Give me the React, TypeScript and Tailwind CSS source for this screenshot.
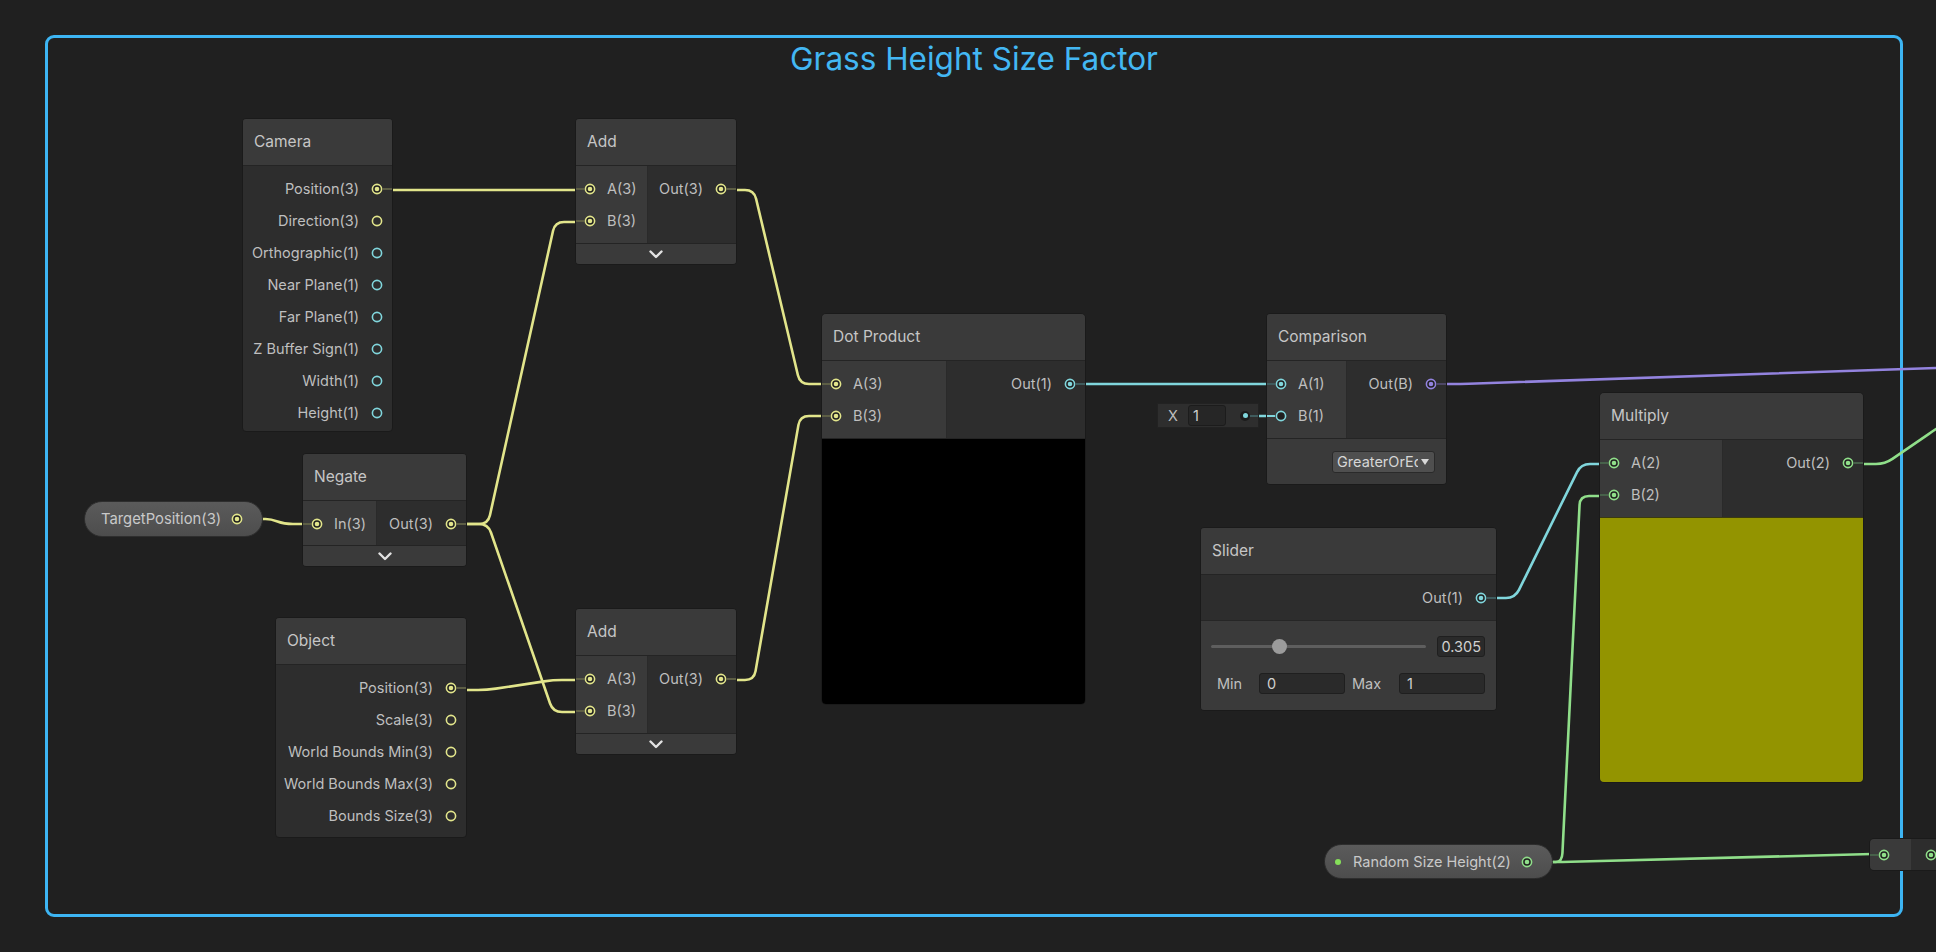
import React from "react";

type T = "v3" | "v1" | "v2" | "b";
const COL: Record<T, string> = { v3: "#e2e58b", v1: "#80d6dc", v2: "#90df8a", b: "#9383df" };
const STUB: Record<T, string> = {
  v3: "bg-[#5d5e45]",
  v1: "bg-[#3f5b5d]",
  v2: "bg-[#47614a]",
  b: "bg-[#4d4766]",
};

function Port({ t, on, dark }: { t: T; on?: boolean; dark?: boolean }) {
  const c = COL[t];
  return (
    <svg width="12" height="12" viewBox="0 0 12 12" className="block shrink-0">
      <circle cx="6" cy="6" r="4.6" fill={on || dark ? "#202020" : "none"} stroke={c} strokeWidth="1.6" />
      {on && <circle cx="6" cy="6" r="2.3" fill={c} />}
    </svg>
  );
}

function OutRow({ label, t, on }: { label: string; t: T; on?: boolean }) {
  return (
    <div className="flex h-[32px] items-center justify-end">
      <span className="mr-[12px] whitespace-nowrap text-[14.5px] text-[#bfbfbf]">{label}</span>
      <Port t={t} on={on} />
      <div className={on ? `h-[2px] w-[9px] ${STUB[t]}` : "h-[2px] w-[9px]"} />
    </div>
  );
}

function InRow({ label, t, on, bright, dark }: { label: string; t: T; on?: boolean; bright?: boolean; dark?: boolean }) {
  return (
    <div className="flex h-[32px] items-center">
      <div className={bright ? "h-[2px] w-[8px] bg-[#80d6dc]" : on ? `h-[2px] w-[8px] ${STUB[t]}` : "h-[2px] w-[8px]"} />
      <Port t={t} on={on} dark={dark} />
      <span className="ml-[11px] whitespace-nowrap text-[14.5px] text-[#bfbfbf]">{label}</span>
    </div>
  );
}

function Header({ title }: { title: string }) {
  return (
    <div className="flex h-[47px] items-center border-b border-[#242424] bg-[#3a3a3a] pl-[11px] text-[15.5px] text-[#c6c6c6]">
      {title}
    </div>
  );
}

function Collapse() {
  return (
    <div className="flex h-[21px] items-center justify-center border-t border-[#242424] bg-[#3a3a3a]">
      <svg width="14" height="9" viewBox="0 0 14 9">
        <polyline points="1.5,1.5 7,7 12.5,1.5" fill="none" stroke="#e2e2e2" strokeWidth="2.4" strokeLinecap="round" strokeLinejoin="round" />
      </svg>
    </div>
  );
}

function rp(pts: number[][], r = 9) {
  let d = `M${pts[0][0]},${pts[0][1]}`;
  for (let i = 1; i < pts.length - 1; i++) {
    const [x0, y0] = pts[i - 1];
    const [x1, y1] = pts[i];
    const [x2, y2] = pts[i + 1];
    const l1 = Math.hypot(x1 - x0, y1 - y0);
    const l2 = Math.hypot(x2 - x1, y2 - y1);
    const a = Math.min(r, l1 / 2);
    const b = Math.min(r, l2 / 2);
    const p1 = [x1 - ((x1 - x0) / l1) * a, y1 - ((y1 - y0) / l1) * a];
    const p2 = [x1 + ((x2 - x1) / l2) * b, y1 + ((y2 - y1) / l2) * b];
    d += ` L${p1[0]},${p1[1]} Q${x1},${y1} ${p2[0]},${p2[1]}`;
  }
  const last = pts[pts.length - 1];
  d += ` L${last[0]},${last[1]}`;
  return d;
}

const WIRES: { c: string; p: number[][] }[] = [
  { c: COL.v3, p: [[390, 190], [579, 190]] },
  { c: COL.v3, p: [[464, 524], [488, 524], [555, 222], [579, 222]] },
  { c: COL.v3, p: [[464, 524], [488, 524], [553, 712], [579, 712]] },
  { c: COL.v3, p: [[260, 519], [271, 519], [284, 524], [306, 524]] },
  { c: COL.v3, p: [[464, 690], [487, 690], [553, 680], [579, 680]] },
  { c: COL.v3, p: [[734, 190], [754, 190], [800, 384], [825, 384]] },
  { c: COL.v3, p: [[734, 680], [754, 680], [800, 416], [825, 416]] },
  { c: COL.v1, p: [[1083, 384], [1270, 384]] },
  { c: COL.v1, p: [[1258, 416], [1270, 416]] },
  { c: COL.v1, p: [[1494, 598], [1515, 598], [1581, 464], [1603, 464]] },
  { c: COL.v2, p: [[1550, 862], [1562, 862], [1580, 496], [1603, 496]] },
  { c: COL.v2, p: [[1550, 862], [1562, 862], [1872, 854]] },
  { c: COL.v2, p: [[1861, 464], [1885, 464], [1936, 429], [1966, 409]] },
  { c: COL.b, p: [[1444, 384], [1460, 384], [1966, 367]] },
];

function Wires() {
  return (
    <svg className="pointer-events-none absolute left-0 top-0" width="1936" height="952">
      {WIRES.map((w, i) => (
        <path key={i} d={rp(w.p)} fill="none" stroke={w.c} strokeWidth="2.6" strokeLinecap="round" strokeLinejoin="round" />
      ))}
    </svg>
  );
}

export default function App() {
  return (
    <div className="relative h-[952px] w-[1936px] overflow-hidden bg-[#202020] font-[Inter,sans-serif]">
      {/* Group */}
      <div className="absolute left-[45px] top-[35px] h-[882px] w-[1858px] rounded-[9px] border-[3px] border-[#3db5f3]">
        <div className="flex justify-center pt-[2px] text-[31.5px] leading-[38px] text-[#43b7f3]">Grass Height Size Factor</div>
      </div>

      <Wires />

      {/* Camera */}
      <div className="absolute left-[242px] top-[118px] w-[151px] overflow-hidden rounded-[4px] border border-[#1a1a1a] bg-[#2d2d2d]">
        <Header title="Camera" />
        <div className="pb-[2px] pt-[7px]">
          <OutRow label="Position(3)" t="v3" on />
          <OutRow label="Direction(3)" t="v3" />
          <OutRow label="Orthographic(1)" t="v1" />
          <OutRow label="Near Plane(1)" t="v1" />
          <OutRow label="Far Plane(1)" t="v1" />
          <OutRow label="Z Buffer Sign(1)" t="v1" />
          <OutRow label="Width(1)" t="v1" />
          <OutRow label="Height(1)" t="v1" />
        </div>
      </div>

      {/* Add 1 */}
      <div className="absolute left-[575px] top-[118px] w-[162px] overflow-hidden rounded-[4px] border border-[#1a1a1a] bg-[#2d2d2d]">
        <Header title="Add" />
        <div className="flex">
          <div className="w-[72px] border-r border-[#2a2a2a] bg-[#3a3a3a] pb-[6px] pt-[7px]">
            <InRow label="A(3)" t="v3" on />
            <InRow label="B(3)" t="v3" on />
          </div>
          <div className="flex-1 pb-[6px] pt-[7px]">
            <OutRow label="Out(3)" t="v3" on />
          </div>
        </div>
        <Collapse />
      </div>

      {/* Target Position pill */}
      <div className="absolute left-[84px] top-[501px] flex h-[36px] w-[179px] items-center rounded-full border border-[#2e2e2e] bg-gradient-to-b from-[#5b5b5b] to-[#4d4d4d] pl-[16px] pr-[19px]">
        <span className="flex-1 whitespace-nowrap text-[14.8px] text-[#c9c9c9]">TargetPosition(3)</span>
        <Port t="v3" on />
      </div>

      {/* Negate */}
      <div className="absolute left-[302px] top-[453px] w-[165px] overflow-hidden rounded-[4px] border border-[#1a1a1a] bg-[#2d2d2d]">
        <Header title="Negate" />
        <div className="flex">
          <div className="w-[74px] border-r border-[#2a2a2a] bg-[#3a3a3a] pb-[5px] pt-[7px]">
            <InRow label="In(3)" t="v3" on />
          </div>
          <div className="flex-1 pb-[5px] pt-[7px]">
            <OutRow label="Out(3)" t="v3" on />
          </div>
        </div>
        <Collapse />
      </div>

      {/* Object */}
      <div className="absolute left-[275px] top-[617px] w-[192px] overflow-hidden rounded-[4px] border border-[#1a1a1a] bg-[#2d2d2d]">
        <Header title="Object" />
        <div className="pb-[5px] pt-[7px]">
          <OutRow label="Position(3)" t="v3" on />
          <OutRow label="Scale(3)" t="v3" />
          <OutRow label="World Bounds Min(3)" t="v3" />
          <OutRow label="World Bounds Max(3)" t="v3" />
          <OutRow label="Bounds Size(3)" t="v3" />
        </div>
      </div>

      {/* Add 2 */}
      <div className="absolute left-[575px] top-[608px] w-[162px] overflow-hidden rounded-[4px] border border-[#1a1a1a] bg-[#2d2d2d]">
        <Header title="Add" />
        <div className="flex">
          <div className="w-[72px] border-r border-[#2a2a2a] bg-[#3a3a3a] pb-[6px] pt-[7px]">
            <InRow label="A(3)" t="v3" on />
            <InRow label="B(3)" t="v3" on />
          </div>
          <div className="flex-1 pb-[6px] pt-[7px]">
            <OutRow label="Out(3)" t="v3" on />
          </div>
        </div>
        <Collapse />
      </div>

      {/* Dot Product */}
      <div className="absolute left-[821px] top-[313px] w-[265px] overflow-hidden rounded-[5px] border border-[#1a1a1a] bg-[#2d2d2d]">
        <Header title="Dot Product" />
        <div className="flex">
          <div className="w-[125px] border-r border-[#2a2a2a] bg-[#3a3a3a] pb-[6px] pt-[7px]">
            <InRow label="A(3)" t="v3" on />
            <InRow label="B(3)" t="v3" on />
          </div>
          <div className="flex-1 pb-[6px] pt-[7px]">
            <OutRow label="Out(1)" t="v1" on />
          </div>
        </div>
        <div className="h-[266px] border-t border-[#242424] bg-black" />
      </div>

      {/* X inline field */}
      <div className="absolute left-[1157px] top-[403px] flex h-[25px] w-[102px] items-center border border-[#222222] bg-[#2e2e2e] pl-[10px]">
        <span className="w-[20px] text-[14.5px] text-[#bdbdbd]">X</span>
        <div className="flex h-[21px] w-[38px] items-center rounded-[3px] border border-[#1c1c1c] bg-[#262626] pl-[4px] text-[14.5px] text-[#cfcfcf]">
          1
        </div>
        <div className="ml-[14px] flex h-[10px] w-[10px] shrink-0 items-center justify-center rounded-full bg-[#1c1c1c]">
          <div className="h-[5px] w-[5px] rounded-full bg-[#80d6dc]" />
        </div>
        <div className="h-[2px] flex-1 bg-[#3f5b5d]" />
      </div>

      {/* Comparison */}
      <div className="absolute left-[1266px] top-[313px] w-[181px] overflow-hidden rounded-[4px] border border-[#1a1a1a] bg-[#2d2d2d]">
        <Header title="Comparison" />
        <div className="flex">
          <div className="w-[80px] border-r border-[#2a2a2a] bg-[#3a3a3a] pb-[6px] pt-[7px]">
            <InRow label="A(1)" t="v1" on />
            <InRow label="B(1)" t="v1" bright dark />
          </div>
          <div className="flex-1 pb-[6px] pt-[7px]">
            <OutRow label="Out(B)" t="b" on />
          </div>
        </div>
        <div className="flex h-[46px] items-center justify-end border-t border-[#242424] bg-[#3a3a3a] pr-[11px]">
          <div className="flex h-[22px] w-[103px] items-center rounded-[3px] border border-[#2a2a2a] bg-[#4f4f4f] pl-[4px]">
            <span className="w-[81px] overflow-hidden whitespace-nowrap text-[14.5px] leading-[20px] text-[#d6d6d6]">GreaterOrEqual</span>
            <svg width="8" height="6" viewBox="0 0 8 6" className="ml-[3px]">
              <polygon points="0,0 8,0 4,6" fill="#d8d8d8" />
            </svg>
          </div>
        </div>
      </div>

      {/* Slider */}
      <div className="absolute left-[1200px] top-[527px] w-[297px] overflow-hidden rounded-[4px] border border-[#1a1a1a] bg-[#2d2d2d]">
        <Header title="Slider" />
        <div className="flex h-[45px] items-center justify-end">
          <OutRow label="Out(1)" t="v1" on />
        </div>
        <div className="border-t border-[#262626] bg-[#3a3a3a] pb-[16px] pl-[10px] pr-[11px] pt-[15px]">
          <div className="flex h-[21px] items-center">
            <div className="relative h-[3px] flex-1 rounded-full bg-[#5e5e5e]">
              <div className="absolute left-[61px] top-[-6px] h-[15px] w-[15px] rounded-full bg-[#9b9b9b]" />
            </div>
            <div className="ml-[11px] flex h-[21px] w-[48px] items-center justify-end rounded-[3px] border border-[#1f1f1f] bg-[#2a2a2a] pr-[3px] text-[14.5px] text-[#d0d0d0]">
              0.305
            </div>
          </div>
          <div className="mt-[16px] flex h-[21px] items-center pl-[6px] text-[14.5px] text-[#bfbfbf]">
            <span className="w-[42px]">Min</span>
            <div className="flex h-[21px] w-[86px] items-center rounded-[3px] border border-[#1f1f1f] bg-[#2a2a2a] pl-[7px] text-[#d0d0d0]">0</div>
            <span className="ml-[7px] w-[47px]">Max</span>
            <div className="flex h-[21px] w-[86px] items-center rounded-[3px] border border-[#1f1f1f] bg-[#2a2a2a] pl-[7px] text-[#d0d0d0]">1</div>
          </div>
        </div>
      </div>

      {/* Multiply */}
      <div className="absolute left-[1599px] top-[392px] w-[265px] overflow-hidden rounded-[5px] border border-[#1a1a1a] bg-[#2d2d2d]">
        <Header title="Multiply" />
        <div className="flex">
          <div className="w-[123px] border-r border-[#2a2a2a] bg-[#3a3a3a] pb-[6px] pt-[7px]">
            <InRow label="A(2)" t="v2" on />
            <InRow label="B(2)" t="v2" on />
          </div>
          <div className="flex-1 pb-[6px] pt-[7px]">
            <OutRow label="Out(2)" t="v2" on />
          </div>
        </div>
        <div className="h-[265px] border-t border-[#3a3a10] bg-[#939400]" />
      </div>

      {/* Random Size Height pill */}
      <div className="absolute left-[1324px] top-[844px] flex h-[35px] w-[229px] items-center rounded-full border border-[#2e2e2e] bg-gradient-to-b from-[#5b5b5b] to-[#4d4d4d] pl-[10px] pr-[19px]">
        <div className="h-[6px] w-[6px] rounded-full bg-[#86e05a]" />
        <span className="ml-[12px] flex-1 whitespace-nowrap text-[14.5px] text-[#c9c9c9]">Random Size Height(2)</span>
        <Port t="v2" on />
      </div>

      {/* Partial node at right edge */}
      <div className="absolute left-[1869px] top-[838px] flex h-[33px] w-[100px] overflow-hidden rounded-l-[5px] border border-[#1a1a1a]">
        <div className="flex w-[41px] items-center bg-[#3a3a3a]">
          <div className="h-[2px] w-[8px] bg-[#47614a]" />
          <Port t="v2" on />
        </div>
        <div className="flex flex-1 items-center bg-[#2d2d2d] pl-[14px]">
          <Port t="v2" on />
        </div>
      </div>
    </div>
  );
}
